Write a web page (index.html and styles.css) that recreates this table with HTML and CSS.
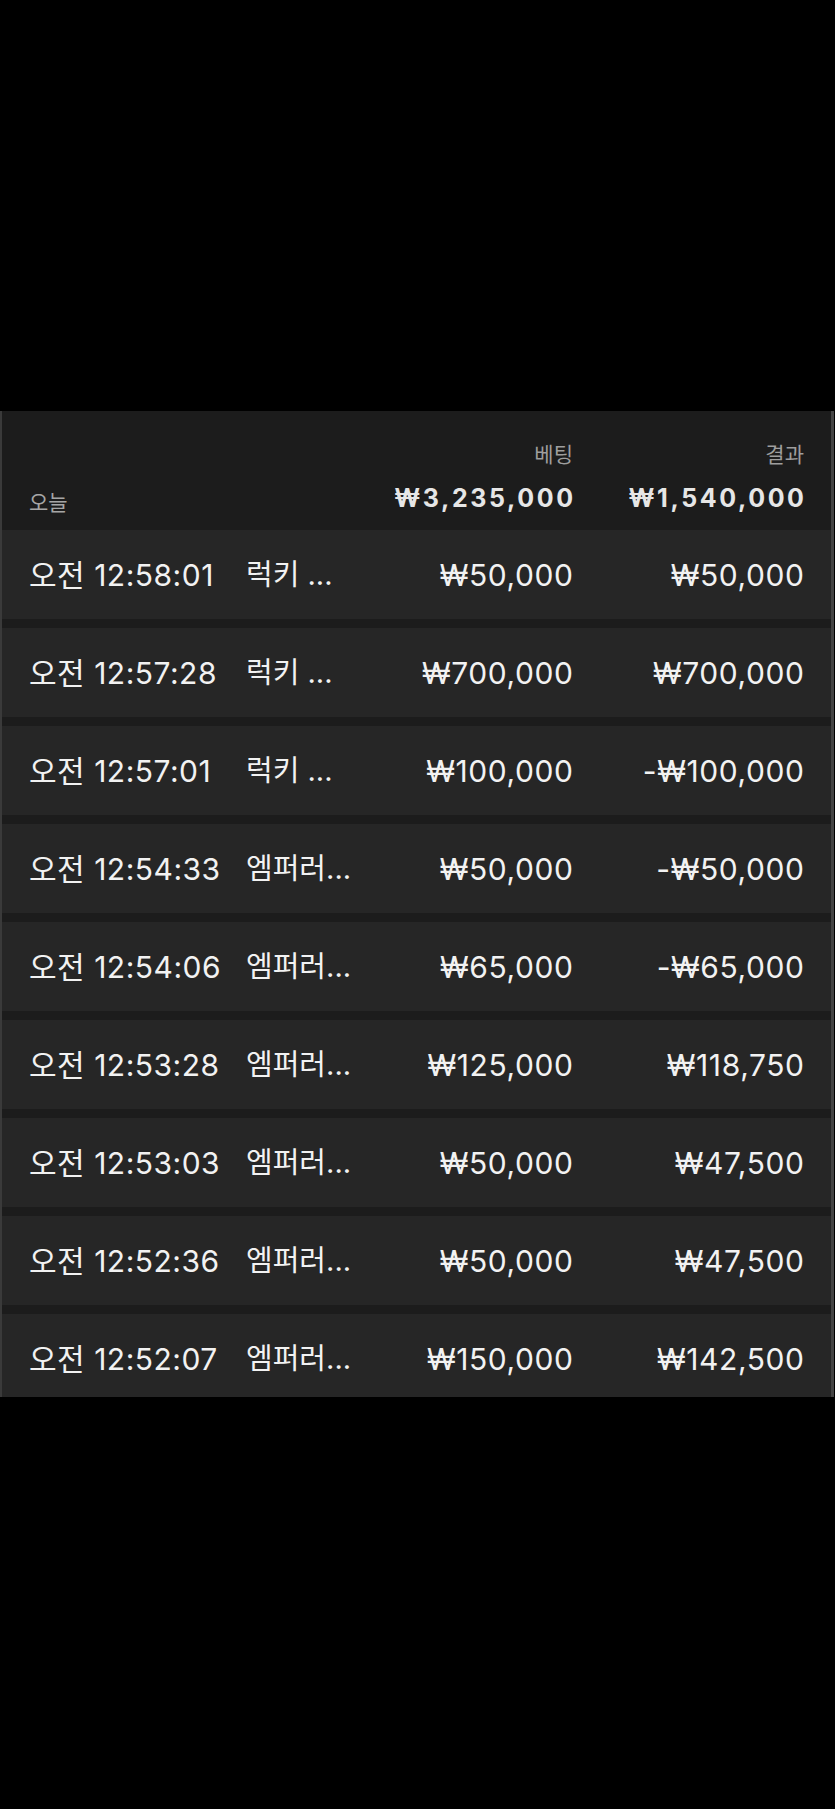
FILE: index.html
```html
<!DOCTYPE html>
<html lang="ko">
<head>
<meta charset="utf-8">
<title>베팅 내역</title>
<link rel="stylesheet" href="styles.css">
</head>
<body>
<div class="top-space"></div>
<section class="panel">
  <div class="head">
    <div class="lbl lbl-bet">베팅</div>
    <div class="lbl lbl-res">결과</div>
    <div class="today">오늘</div>
    <div class="total total-bet">₩3,235,000</div>
    <div class="total total-res">₩1,540,000</div>
  </div>
  <div class="rows">
    <div class="row"><span class="time">오전 12:58:01</span><span class="name">럭키 ...</span><span class="amt">₩50,000</span><span class="amt">₩50,000</span></div>
    <div class="row"><span class="time">오전 12:57:28</span><span class="name">럭키 ...</span><span class="amt">₩700,000</span><span class="amt">₩700,000</span></div>
    <div class="row"><span class="time">오전 12:57:01</span><span class="name">럭키 ...</span><span class="amt">₩100,000</span><span class="amt">-₩100,000</span></div>
    <div class="row"><span class="time">오전 12:54:33</span><span class="name">엠퍼러...</span><span class="amt">₩50,000</span><span class="amt">-₩50,000</span></div>
    <div class="row"><span class="time">오전 12:54:06</span><span class="name">엠퍼러...</span><span class="amt">₩65,000</span><span class="amt">-₩65,000</span></div>
    <div class="row"><span class="time">오전 12:53:28</span><span class="name">엠퍼러...</span><span class="amt">₩125,000</span><span class="amt">₩118,750</span></div>
    <div class="row"><span class="time">오전 12:53:03</span><span class="name">엠퍼러...</span><span class="amt">₩50,000</span><span class="amt">₩47,500</span></div>
    <div class="row"><span class="time">오전 12:52:36</span><span class="name">엠퍼러...</span><span class="amt">₩50,000</span><span class="amt">₩47,500</span></div>
    <div class="row"><span class="time">오전 12:52:07</span><span class="name">엠퍼러...</span><span class="amt">₩150,000</span><span class="amt">₩142,500</span></div>
  </div>
</section>
</body>
</html>
```

FILE: styles.css
```css
html, body {
  margin: 0;
  padding: 0;
  background: #000;
}
body {
  width: 835px;
  height: 1809px;
  overflow: hidden;
  font-family: Inter, "Noto Sans CJK KR", sans-serif;
  color: #f2f2f2;
}
.top-space {
  height: 411px;
}
.panel {
  height: 986px;
  margin-right: 1px;
  background: #1c1c1c;
  border-left: 2px solid #3a3a3a;
  border-right: 3px solid #444;
  overflow: hidden;
}
.head {
  height: 119px;
  box-sizing: border-box;
  padding: 31px 27px 17px 27px;
  display: grid;
  grid-template-columns: 217px 100px 227px 231px;
  grid-template-rows: 26px 30px;
  row-gap: 15px;
}
.lbl {
  font-size: 21px;
  line-height: 26px;
  color: #9e9e9e;
  text-align: right;
  grid-row: 1;
}
.lbl-bet { grid-column: 3; }
.lbl-res { grid-column: 4; }
.today {
  grid-column: 1;
  grid-row: 2;
  align-self: end;
  margin-bottom: -3px;
  font-size: 21px;
  line-height: 26px;
  color: #a6a6a6;
}
.total {
  grid-row: 2;
  font-size: 25px;
  line-height: 30px;
  font-weight: 700;
  letter-spacing: 2.6px;
  text-align: right;
  color: #e6e6e6;
  margin-right: -2.6px;
}
.total-bet { grid-column: 3; }
.total-res { grid-column: 4; }
.rows {
  display: flex;
  flex-direction: column;
  gap: 9px;
}
.row {
  flex: 0 0 89px;
  background: #262626;
  display: grid;
  grid-template-columns: 217px 100px 227px 231px;
  align-items: center;
  padding: 0 27px 0 27px;
  font-size: 30px;
  line-height: 36px;
  white-space: nowrap;
}
.time {
  text-align: left;
  letter-spacing: 0.5px;
}
.name {
  text-align: left;
  font-size: 29px;
}
.amt {
  text-align: right;
  letter-spacing: 0.6px;
  margin-right: -0.6px;
}
```
